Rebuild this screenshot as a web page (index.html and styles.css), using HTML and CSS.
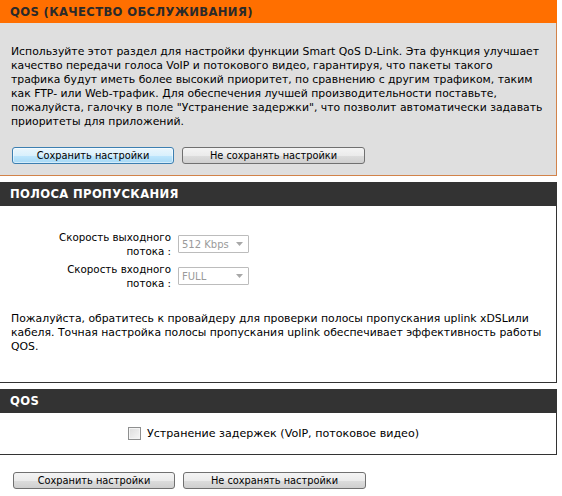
FILE: index.html
```html
<!DOCTYPE html>
<html lang="ru">
<head>
<meta charset="utf-8">
<title>QoS</title>
<link rel="stylesheet" href="styles.css">
</head>
<body>
<div class="page">
  <section class="box">
    <h2 class="box-title box-title--orange">QOS (КАЧЕСТВО ОБСЛУЖИВАНИЯ)</h2>
    <div class="box-body box-body--grey">
      <p class="text">Используйте этот раздел для настройки функции Smart QoS D-Link. Эта функция улучшает качество передачи голоса VoIP и потокового видео, гарантируя, что пакеты такого трафика будут иметь более высокий приоритет, по сравнению с другим трафиком, таким как FTP- или Web-трафик. Для обеспечения лучшей производительности поставьте, пожалуйста, галочку в поле "Устранение задержки", что позволит автоматически задавать приоритеты для приложений.</p>
      <div class="actions">
        <button class="btn btn--focus" type="button">Сохранить настройки</button>
        <button class="btn btn--wide" type="button">Не сохранять настройки</button>
      </div>
    </div>
  </section>

  <section class="box box--spaced">
    <h2 class="box-title box-title--dark">ПОЛОСА ПРОПУСКАНИЯ</h2>
    <div class="box-body box-body--white box-body--bw">
      <div class="form">
        <div class="form-row">
          <label class="form-label">Скорость выходного потока :</label>
          <div class="select"><span class="select-value">512 Kbps</span><svg class="select-arrow" width="7" height="4" viewBox="0 0 7 4"><path d="M0 0h7L3.5 4z" fill="#a8a8a8"/></svg></div>
        </div>
        <div class="form-row">
          <label class="form-label">Скорость входного потока :</label>
          <div class="select"><span class="select-value">FULL</span><svg class="select-arrow" width="7" height="4" viewBox="0 0 7 4"><path d="M0 0h7L3.5 4z" fill="#a8a8a8"/></svg></div>
        </div>
      </div>
      <p class="text text--note">Пожалуйста, обратитесь к провайдеру для проверки полосы пропускания uplink xDSLили кабеля. Точная настройка полосы пропускания uplink обеспечивает эффективность работы QOS.</p>
    </div>
  </section>

  <section class="box box--spaced">
    <h2 class="box-title box-title--dark">QOS</h2>
    <div class="box-body box-body--white box-body--check">
      <label class="check"><span class="check-box"></span>Устранение задержек (VoIP, потоковое видео)</label>
    </div>
  </section>

  <div class="actions actions--bottom">
    <button class="btn" type="button">Сохранить настройки</button>
    <button class="btn btn--wide" type="button">Не сохранять настройки</button>
  </div>
</div>
</body>
</html>
```

FILE: styles.css
```css
html, body {
  margin: 0;
  padding: 0;
  background: #ffffff;
}

body {
  font-family: "DejaVu Sans", Verdana, sans-serif;
  font-size: 10.85px;
  color: #000000;
}

.page {
  width: 558px;
  margin-left: -1px;
}

.box--spaced {
  margin-top: 6px;
}

.box-title {
  margin: 0;
  padding-left: 11px;
  font-family: "DejaVu Sans", Verdana, sans-serif;
  font-weight: bold;
  font-size: 11.6px;
  letter-spacing: 0.35px;
}

.box-title--orange {
  height: 23px;
  line-height: 24px;
  background: #ff6f00;
  color: #2a2a2a;
}

.box-title--dark {
  height: 24px;
  line-height: 25px;
  background: #333333;
  color: #ffffff;
}

.box-body--grey {
  background: #dfdfdf;
  border: 1px solid #d2834a;
  border-top: 0;
  padding: 22px 13.5px 11px 11px;
}

.box-body--white {
  background: #ffffff;
  border: 1px solid #333333;
  border-top: 0;
}

.box-body--bw {
  padding: 24px 14.5px 28px 11px;
}

.text {
  margin: 0;
  line-height: 14px;
}

.text--note {
  margin-top: 22px;
}

.actions {
  display: flex;
  gap: 8px;
  margin-top: 18px;
}

.actions--bottom {
  margin-top: 17px;
  padding-left: 13px;
}

.actions .btn:first-child {
  margin-left: 1px;
}

.btn {
  width: 162px;
  height: 17px;
  padding: 0;
  border: 1px solid #707070;
  border-radius: 3px;
  background: linear-gradient(#f4f4f4 0%, #ebebeb 50%, #dddddd 51%, #cfcfcf 100%);
  font-family: "DejaVu Sans", Verdana, sans-serif;
  font-size: 9.8px;
  color: #000000;
  line-height: 15px;
}

.btn--wide {
  width: 183px;
}

.btn--focus {
  border-color: #3c7fb1;
  background: linear-gradient(#eaf6fd 0%, #d9f0fc 50%, #bee6fd 51%, #a7d9f5 100%);
  box-shadow: inset 0 0 0 1px rgba(255, 255, 255, 0.5);
}

.form {
  display: flex;
  flex-direction: column;
  gap: 4px;
  padding-left: 42px;
}

.form-row {
  display: flex;
  align-items: center;
  gap: 7px;
}

.form-label {
  width: 118px;
  text-align: right;
  line-height: 14px;
  font-size: 10.3px;
}

.select {
  width: 71px;
  height: 18px;
  border: 1px solid #bcbcbc;
  border-radius: 1px;
  background: #ffffff;
  display: flex;
  align-items: center;
  justify-content: space-between;
  padding: 0 5px 0 3px;
  box-sizing: border-box;
  color: #9a9a9a;
  font-size: 10px;
}

.select-arrow {
  flex: none;
}

.box-body--check {
  height: 41px;
  display: flex;
  align-items: center;
  justify-content: center;
}

.check {
  display: flex;
  align-items: center;
  gap: 6px;
  font-size: 11.1px;
  margin-right: 9px;
}

.check-box {
  width: 11px;
  height: 11px;
  border: 1px solid #8e8f8f;
  background: linear-gradient(135deg, #dcdcdc, #f6f6f6);
  box-shadow: inset 0 0 0 1px #f4f4f4;
}
```
